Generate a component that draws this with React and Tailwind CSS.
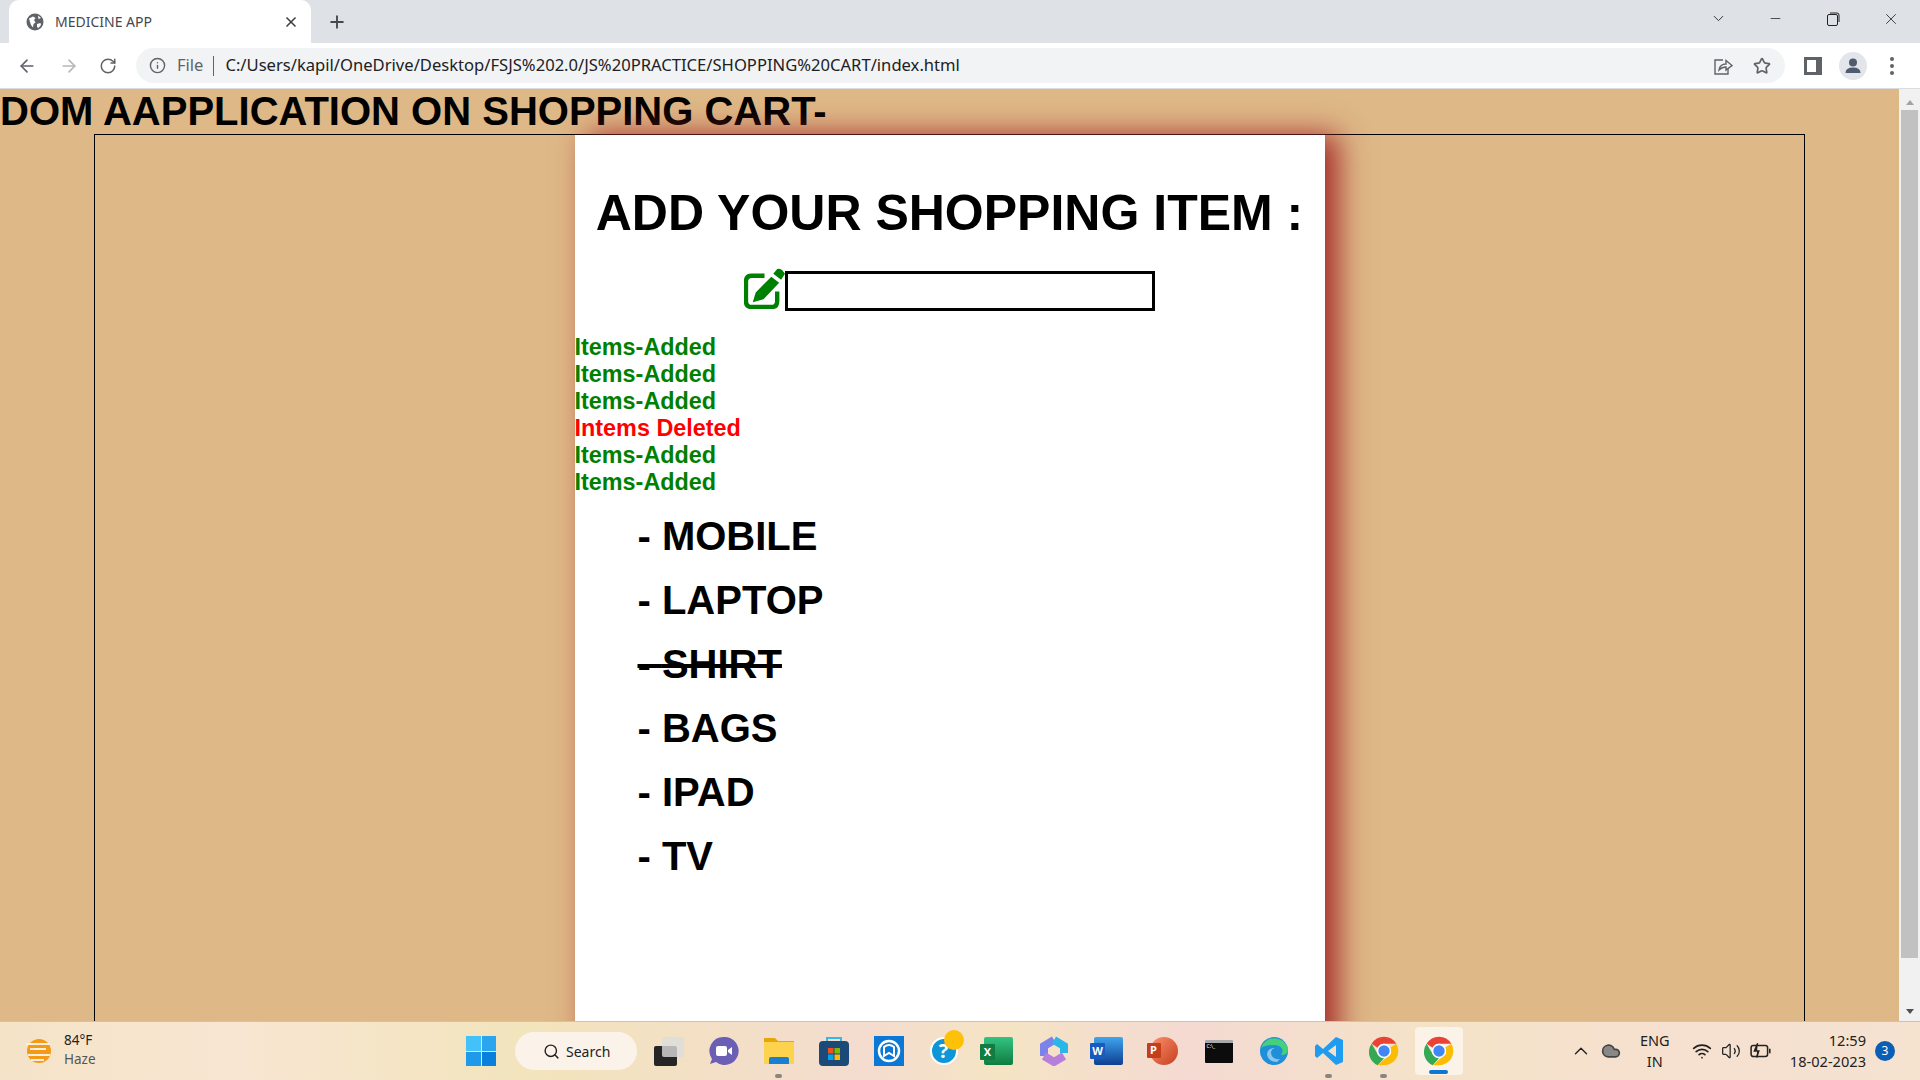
import { ArrowLeft, ArrowRight, RotateCw, Info, Star, X, Plus, ChevronDown, Minus, Search, ChevronUp, Wifi, Volume2, Cloud } from 'lucide-react'

const LOGS = ['Items-Added', 'Items-Added', 'Items-Added', 'Intems Deleted', 'Items-Added', 'Items-Added']
const ITEMS = [
  { name: 'MOBILE' },
  { name: 'LAPTOP' },
  { name: 'SHIRT', done: true },
  { name: 'BAGS' },
  { name: 'IPAD' },
  { name: 'TV' },
]

function Globe() {
  return (
    <svg width="18" height="18" viewBox="0 0 18 18">
      <circle cx="9" cy="9" r="8.5" fill="#5f6368" />
      <path d="M3 5.5 L7 3.5 L9.5 5 L8 7 L9.5 9.5 L7.5 11 L7 14.5 L5 12 L4 9 Z M11 11 L14.5 10 L15 12 L12.5 15 L11 14 Z M12 2.5 L15 5 L12.5 6 Z" fill="#fff" />
    </svg>
  )
}

function TabStrip() {
  return (
    <div className="flex h-[43px] shrink-0 items-end bg-[#dee1e6]">
      <div className="ml-[9px] flex h-[43px] w-[302px] items-center rounded-t-[10px] bg-white pl-[17px] pr-[12px]">
        <Globe />
        <span className="ml-[11px] flex-1 text-[14px] text-[#45494e]">MEDICINE APP</span>
        <X size={16} strokeWidth={2.5} className="text-[#3c4043]" />
      </div>
      <div className="ml-[16px] flex h-[43px] items-center">
        <Plus size={20} strokeWidth={2.25} className="text-[#45494e]" />
      </div>
      <div className="flex-1" />
      <div className="mb-[6px] flex items-center self-stretch text-[#222]">
        <ChevronDown size={17} strokeWidth={1.25} />
        <Minus size={15} strokeWidth={1.25} className="ml-[41px]" />
        <svg width="14" height="14" viewBox="0 0 14 14" fill="none" stroke="#222" className="ml-[43px]">
          <rect x="1.5" y="2.5" width="10" height="11" rx="1.5" />
          <path d="M4 1 H11 Q13 1 13 3 V10" />
        </svg>
        <X size={18} strokeWidth={1.1} className="ml-[42px] mr-[20px]" />
      </div>
    </div>
  )
}

function Toolbar() {
  return (
    <div className="flex h-[46px] shrink-0 items-center border-b border-[#dadce0] bg-white">
      <ArrowLeft size={20} className="ml-[17px] text-[#5f6368]" />
      <ArrowRight size={20} className="ml-[22px] text-[#b4b6b9]" />
      <RotateCw size={18} className="ml-[20px] text-[#5f6368]" />
      <div className="ml-[19px] flex h-[35px] flex-1 items-center rounded-full bg-[#f1f3f4] pl-[13px] pr-[14px]">
        <Info size={17} className="text-[#5f6368]" />
        <span className="ml-[11px] text-[16.5px] text-[#5f6368]">File</span>
        <span className="ml-[10px] mr-[11px] h-[20px] w-px bg-[#5f6368]" />
        <span className="flex-1 text-[16.6px] text-[#202124]">C:/Users/kapil/OneDrive/Desktop/FSJS%202.0/JS%20PRACTICE/SHOPPING%20CART/index.html</span>
        <svg width="20" height="20" viewBox="0 0 20 20" fill="none" stroke="#5f6368" strokeWidth="1.4">
          <path d="M10 4 H2 V18 H15 V13" />
          <path d="M6 14 Q7 8 13 8 V4.5 L19 9.5 L13 14 V11 Q9 11 6 14 Z" />
        </svg>
        <Star size={18} strokeWidth={2.25} className="ml-[20px] text-[#5f6368]" />
      </div>
      <div className="ml-[19px] flex h-[18px] w-[18px] items-center bg-[#5f6368] pl-[3px]">
        <div className="h-[12px] w-[9px] bg-white" />
      </div>
      <div className="ml-[17px] flex h-[28px] w-[28px] items-center justify-center rounded-full bg-[#e3e5ea]">
        <svg width="18" height="18" viewBox="0 0 18 18" fill="#4f5b6e">
          <circle cx="9" cy="5.5" r="4" />
          <path d="M1.5 16 Q1.5 10.5 9 10.5 Q16.5 10.5 16.5 16 Z" />
        </svg>
      </div>
      <div className="ml-[23px] mr-[26px] flex flex-col gap-[3px]">
        <span className="h-[4px] w-[4px] rounded-full bg-[#5f6368]" />
        <span className="h-[4px] w-[4px] rounded-full bg-[#5f6368]" />
        <span className="h-[4px] w-[4px] rounded-full bg-[#5f6368]" />
      </div>
    </div>
  )
}

function PageContent() {
  return (
    <div className="min-w-0 flex-1 overflow-hidden bg-[#deb887] font-['Liberation_Sans',Arial,sans-serif] text-black">
      <h1 className="h-[45px] whitespace-nowrap text-[40px] leading-[44px] font-bold">DOM AAPPLICATION ON SHOPPING CART-</h1>
      <div className="mx-[94px] flex justify-center border border-black">
        <div className="h-[930px] w-[750px] bg-white shadow-[13px_0_28px_#a52a2a]">
          <h2 className="mt-[48px] text-center text-[50px] leading-[60px] font-bold">ADD YOUR SHOPPING ITEM :</h2>
          <div className="mt-[25px] flex items-end justify-center">
            <svg width="41" height="41" viewBox="0 0 42 42" className="mb-[2px]">
              <path d="M21 8 H8 Q2 8 2 14 V34 Q2 40 8 40 H28 Q34 40 34 34 V24" fill="none" stroke="#008000" strokeWidth="4.5" />
              <path d="M28 9 L36 15 L20 32 L9 35 L12 25 Z M30 6 L34 1 Q36 0 39 2 L42 6 L38 12 Z" fill="#008000" />
            </svg>
            <input className="h-[40px] w-[370px] border-[3px] border-black bg-white" />
          </div>
          <div className="mt-[23px]">
            {LOGS.map((log, i) => (
              <div key={i} className={`text-[23.4px] leading-[27px] font-bold ${log === 'Intems Deleted' ? 'text-[#ff0000]' : 'text-[#008000]'}`}>
                {log}
              </div>
            ))}
          </div>
          <ul className="mt-[17px] pl-[63px]">
            {ITEMS.map((item) => (
              <li key={item.name} className={`h-[64px] text-[40px] leading-[46px] font-bold ${item.done ? 'line-through' : ''}`}>
                - {item.name}
              </li>
            ))}
          </ul>
        </div>
      </div>
    </div>
  )
}

function Scrollbar() {
  return (
    <div className="flex w-[21px] shrink-0 flex-col items-center bg-[#f1f1f1]">
      <div className="mt-[11px] h-0 w-0 border-x-[4px] border-b-[5px] border-x-transparent border-b-[#a3a3a3]" />
      <div className="mt-[5px] h-[848px] w-[17px] bg-[#c1c1c1]" />
      <div className="mt-auto mb-[7px] h-0 w-0 border-x-[4px] border-t-[5px] border-x-transparent border-t-[#505050]" />
    </div>
  )
}

function Chrome({ size = 42 }) {
  return (
    <svg width={size} height={size} viewBox="0 0 42 42">
      <path d="M21 1 A20 20 0 0 1 38.3 11 H21 A10 10 0 0 0 12 16.5 L3.7 11 A20 20 0 0 1 21 1 Z" fill="#ea4335" />
      <path d="M3.7 11 L12.5 26 A10 10 0 0 0 21 31 L12 41 A20 20 0 0 1 3.7 11 Z" fill="#34a853" />
      <path d="M38.3 11 A20 20 0 0 1 21 41 L12 41 L29.5 26 A10 10 0 0 0 29.5 16 Z" fill="#fbbc04" />
      <circle cx="21" cy="21" r="10" fill="#fff" />
      <circle cx="21" cy="21" r="8" fill="#4285f4" />
    </svg>
  )
}

function TaskIcon({ children, running }) {
  return (
    <div className="relative flex h-[49px] w-[55px] items-center justify-center">
      {children}
      {running && <span className="absolute bottom-[-2px] h-[4px] w-[7px] rounded-full bg-[#8a8580]" />}
    </div>
  )
}

function Taskbar() {
  return (
    <div className="flex h-[59px] shrink-0 items-center border-t border-[#c9c4ba] bg-[linear-gradient(90deg,#f5e3c8_0%,#f8e6d2_12%,#f2e4bc_28%,#f4dccf_45%,#f5e4c4_52%,#f4dad2_62%,#f4e3c8_75%,#f6e0d0_88%,#f5e2cf_100%)] font-['Noto_Sans',sans-serif] text-[#222]">
      <svg width="26" height="30" viewBox="0 0 26 30" className="ml-[26px]">
        <circle cx="13" cy="15" r="12" fill="#f59a14" />
        <path d="M0 8 H24 M4 13 H20 M2 19 H24 M5 24 H18" stroke="#fbeedd" strokeWidth="2" />
      </svg>
      <div className="ml-[12px] w-[60px] pb-[2px] text-[13.5px] leading-[19px]">
        <div>84°F</div>
        <div className="text-[#555]">Haze</div>
      </div>
      <div className="ml-[342px] grid h-[30px] w-[30px] grid-cols-2 gap-px">
        <div className="bg-[#45c1f9]" />
        <div className="bg-[#2aa5ee]" />
        <div className="bg-[#1f9aea]" />
        <div className="bg-[#0a7fdb]" />
      </div>
      <div className="ml-[19px] flex h-[38px] w-[122px] items-center rounded-full bg-[#fbf3ea] pl-[28px] text-[14px]">
        <Search size={17} strokeWidth={2} />
        <span className="ml-[6px]">Search</span>
      </div>
      <div className="ml-[4px] flex items-center">
        <TaskIcon>
          <div className="relative h-[29px] w-[30px]">
            <div className="absolute bottom-0 left-0 h-[20px] w-[23px] rounded-[2px] bg-[#252525]" />
            <div className="absolute top-0 right-0 h-[20px] w-[22px] rounded-[2px] bg-[#dcdcdc]/80" />
          </div>
        </TaskIcon>
        <TaskIcon>
          <svg width="30" height="30" viewBox="0 0 30 30">
            <path d="M15 1 A14 14 0 1 1 7 26 L1 28 L3 23 A14 14 0 0 1 15 1 Z" fill="#6b5fb5" />
            <rect x="7" y="10" width="11" height="10" rx="2" fill="#fff" />
            <path d="M19 14 L23 11 V19 L19 16 Z" fill="#fff" />
          </svg>
        </TaskIcon>
        <TaskIcon running>
          <svg width="30" height="28" viewBox="0 0 30 28">
            <path d="M0 1 H11 L14 4 H30 V27 H0 Z" fill="#e3a60c" />
            <rect y="5" width="30" height="22" fill="#fdd34d" />
            <path d="M5 27 V22 Q5 20 7 20 H23 Q25 20 25 22 V27 Z" fill="#1a7fcf" />
          </svg>
        </TaskIcon>
        <TaskIcon>
          <svg width="30" height="30" viewBox="0 0 30 30">
            <path d="M8 6 V2 H22 V6" fill="none" stroke="#35b8e8" strokeWidth="2" />
            <rect y="5" width="30" height="25" rx="4" fill="#1c4a78" />
            <rect x="9" y="12" width="5.5" height="5.5" fill="#f25022" />
            <rect x="15.5" y="12" width="5.5" height="5.5" fill="#7fba00" />
            <rect x="9" y="18.5" width="5.5" height="5.5" fill="#00a4ef" />
            <rect x="15.5" y="18.5" width="5.5" height="5.5" fill="#ffb900" />
          </svg>
        </TaskIcon>
        <TaskIcon>
          <svg width="30" height="30" viewBox="0 0 30 30">
            <rect width="30" height="30" fill="#0a78d4" />
            <circle cx="15" cy="15" r="10" fill="none" stroke="#fff" strokeWidth="2.5" />
            <path d="M10 20 V11 Q15 7 20 11 V20 L15 17 Z" fill="none" stroke="#fff" strokeWidth="2" />
          </svg>
        </TaskIcon>
        <TaskIcon>
          <div className="relative flex h-[28px] w-[28px] items-center justify-center rounded-full border-2 border-white bg-[#0f96d6] text-[20px] leading-none font-bold text-white">
            ?
            <span className="absolute top-[-9px] right-[-8px] h-[20px] w-[20px] rounded-full bg-[#ffc107]" />
          </div>
        </TaskIcon>
        <TaskIcon>
          <div className="relative h-[28px] w-[29px] rounded-[2px] bg-gradient-to-b from-[#33c481] to-[#107c41]">
            <span className="absolute top-[7px] left-[-4px] flex h-[16px] w-[15px] items-center justify-center rounded-[1px] bg-[#107c41] text-[11px] font-bold text-white">X</span>
          </div>
        </TaskIcon>
        <TaskIcon>
          <svg width="28" height="30" viewBox="0 0 28 30" fill="none" strokeWidth="8">
            <path d="M4 20 V10 L14 4" stroke="#7b83eb" />
            <path d="M14 4 L24 10 V17" stroke="#2ab6e8" />
            <path d="M24 20 L14 26 L4 20" stroke="#b77fdc" />
          </svg>
        </TaskIcon>
        <TaskIcon>
          <div className="relative h-[28px] w-[29px] rounded-[2px] bg-gradient-to-b from-[#41a5ee] to-[#103f91]">
            <span className="absolute top-[6px] left-[-4px] flex h-[16px] w-[15px] items-center justify-center rounded-[1px] bg-[#185abd] text-[11px] font-bold text-white">W</span>
          </div>
        </TaskIcon>
        <TaskIcon>
          <div className="relative h-[28px] w-[28px] rounded-full bg-gradient-to-br from-[#ff8f6b] to-[#c43e1c]">
            <span className="absolute top-[6px] left-[-3px] flex h-[15px] w-[14px] items-center justify-center rounded-[1px] bg-[#c43e1c] text-[11px] font-bold text-white">P</span>
          </div>
        </TaskIcon>
        <TaskIcon>
          <div className="h-[23px] w-[28px] rounded-[1px] border-t-[3px] border-[#a9a9a9] bg-[#0c0c0c] pl-[2px] text-[5px] leading-[7px] text-white">C:\_</div>
        </TaskIcon>
        <TaskIcon>
          <svg width="30" height="30" viewBox="0 0 30 30">
            <circle cx="15" cy="15" r="14" fill="#1e8fd8" />
            <path d="M2 12 A14 14 0 0 1 29 13 Q29 19 22 19 Q27 11 16 9 Q6 9 2 12 Z" fill="#45d07c" />
            <path d="M21 23 Q13 24 12 17 Q12 13 16 12 Q9 12 8 18 Q9 26 18 26 Z" fill="#fff" opacity="0.5" />
          </svg>
        </TaskIcon>
        <TaskIcon running>
          <svg width="30" height="30" viewBox="0 0 30 30">
            <path d="M22 1 L29 4 V26 L22 29 L9 17 L3 22 L1 20 V10 L3 8 L9 13 Z M22 9 L14 15 L22 21 Z" fill="#1f9cf0" fillRule="evenodd" />
          </svg>
        </TaskIcon>
        <TaskIcon running>
          <Chrome size={30} />
        </TaskIcon>
        <TaskIcon>
          <div className="relative flex h-[48px] w-[48px] items-center justify-center rounded-[4px] bg-[#fbf3e8]">
            <Chrome size={30} />
            <span className="absolute bottom-[1px] h-[4px] w-[19px] rounded-full bg-[#0a78d4]" />
          </div>
        </TaskIcon>
      </div>
      <div className="flex-1" />
      <ChevronUp size={22} strokeWidth={1.5} />
      <Cloud size={20} fill="#888" className="ml-[9px] text-[#444]" />
      <div className="ml-[16px] w-[36px] text-center text-[14.5px] leading-[21px]">
        <div>ENG</div>
        <div>IN</div>
      </div>
      <Wifi size={20} className="ml-[19px]" />
      <Volume2 size={20} strokeWidth={1.5} className="ml-[9px]" />
      <svg width="22" height="20" viewBox="0 0 20 18" fill="none" stroke="#222" strokeWidth="1.4" className="ml-[9px]">
        <rect x="1" y="4" width="15" height="10" rx="2" />
        <path d="M18 7 V11" />
        <path d="M7 2 L4 9 H8 L6 15" fill="#222" />
      </svg>
      <div className="ml-[18px] text-right text-[14.6px] leading-[21px]">
        <div>12:59</div>
        <div>18-02-2023</div>
      </div>
      <div className="mr-[25px] ml-[9px] flex h-[20px] w-[20px] items-center justify-center rounded-full bg-[#0a5fb4] text-[12px] text-white">3</div>
    </div>
  )
}

export default function App() {
  return (
    <div className="flex h-screen w-full flex-col overflow-hidden bg-white font-['Noto_Sans',sans-serif]">
      <TabStrip />
      <Toolbar />
      <div className="flex min-h-0 flex-1">
        <PageContent />
        <Scrollbar />
      </div>
      <Taskbar />
    </div>
  )
}
